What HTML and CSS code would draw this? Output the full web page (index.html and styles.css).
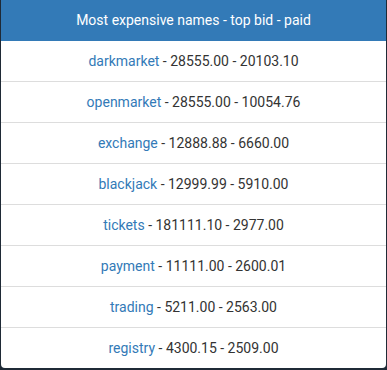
FILE: index.html
```html
<!DOCTYPE html>
<html>
<head>
<meta charset="utf-8">
<link rel="stylesheet" href="styles.css">
</head>
<body>
<div class="panel">
  <div class="panel-heading">Most expensive names - top bid - paid</div>
  <ul class="list">
    <li class="item"><a href="#">darkmarket</a> - 28555.00 - 20103.10</li>
    <li class="item"><a href="#">openmarket</a> - 28555.00 - 10054.76</li>
    <li class="item"><a href="#">exchange</a> - 12888.88 - 6660.00</li>
    <li class="item"><a href="#">blackjack</a> - 12999.99 - 5910.00</li>
    <li class="item"><a href="#">tickets</a> - 181111.10 - 2977.00</li>
    <li class="item"><a href="#">payment</a> - 11111.00 - 2600.01</li>
    <li class="item"><a href="#">trading</a> - 5211.00 - 2563.00</li>
    <li class="item"><a href="#">registry</a> - 4300.15 - 2509.00</li>
  </ul>
</div>
</body>
</html>
```
FILE: styles.css
```css
html, body {
  margin: 0;
  padding: 0;
  background: #1f2a36;
}
body {
  padding: 0 1px 1px 1px;
  font-family: Roboto, "Liberation Sans", sans-serif;
  font-size: 14px;
  line-height: 20px;
  color: #333;
}
.panel {
  background: #fff;
  border-radius: 0 0 4px 4px;
  overflow: hidden;
}
.panel-heading {
  background: #337ab7;
  color: #fff;
  text-align: center;
  padding: 10px 15px;
  height: 21px;
  box-sizing: content-box;
}
.list {
  list-style: none;
  margin: 0;
  padding: 0;
}
.item {
  text-align: center;
  padding: 10px 15px;
  border-top: 1px solid #ddd;
}
.item:first-child {
  border-top: none;
}
.item a {
  color: #337ab7;
  text-decoration: none;
}
```
